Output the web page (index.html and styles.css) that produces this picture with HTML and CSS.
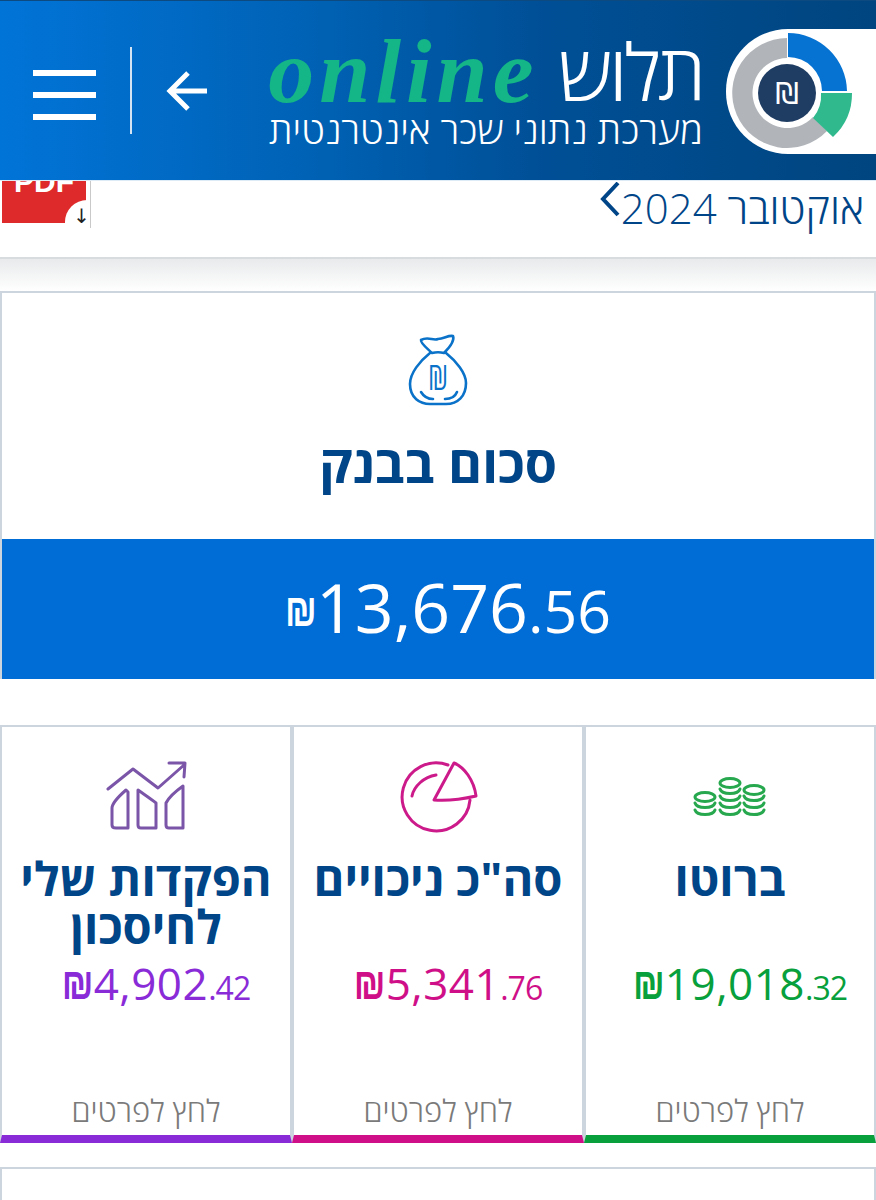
FILE: index.html
```html
<!DOCTYPE html>
<html lang="he" dir="rtl">

<head>
  <meta charset="UTF-8">
  <meta name="viewport" content="width=device-width, initial-scale=1.0">
  <title>תלוש online</title>
  <link rel="stylesheet" href="styles.css">
</head>

<body>
  <header class="top-bar">
    <div class="logo-box">
      <svg class="logo-chart" viewBox="726 28 150 125">
        <path d="M787 37A55 55 0 1 0 827 130L813 116A35 35 0 1 1 787 57Z" fill="#b1b5ba" />
        <path d="M788 32A59 59 0 0 1 847 90H822A34 34 0 0 0 788 56Z" fill="#0673d3" />
        <path d="M821 92H852A59 59 0 0 1 833 136L813 117A35 35 0 0 0 821 92Z" fill="#2fb98d" />
        <circle cx="787" cy="92" r="29" fill="#1f3d63" />
        <text class="logo-shekel" x="787" y="103" text-anchor="middle">₪</text>
      </svg>
    </div>
    <div class="brand">
      <div class="brand-main">
        <span class="brand-name">תלוש</span>
        <span class="brand-online" dir="ltr">online</span>
      </div>
      <div class="brand-sub">מערכת נתוני שכר אינטרנטית</div>
    </div>
    <svg class="back-arrow" viewBox="0 0 44 44">
      <path d="M42 22H5M23 4L5 22L23 40" />
    </svg>
    <div class="divider"></div>
    <div class="menu-btn">
      <span></span>
      <span></span>
      <span></span>
    </div>
  </header>

  <section class="month-bar">
    <div class="month">
      <span>אוקטובר 2024</span>
      <svg class="chevron" viewBox="0 0 22 40">
        <path d="M20 1L5 17L20 33" />
      </svg>
    </div>
    <div class="pdf-icon">
      <div class="pdf-page">PDF</div>
      <div class="pdf-corner">↓</div>
    </div>
  </section>
  <div class="bar-shadow"></div>

  <section class="bank-card">
    <div class="bank-head">
      <svg class="bag-icon" viewBox="405 330 66 78">
        <path d="M430 352C420 360 410 372 410 383C410 397 420 403 430 403H446C458 403 466 395 466 382C466 372 456 360 446 352" />
        <path d="M432 352C428 348 420 342 421 339C428 335 433 340 438 338C444 338 448 334 453 335C455 340 449 347 444 352C440 351 436 351 432 352Z" />
        <path d="M421 391C424 396 428 398 433 398M445 398C451 398 455 396 457 391" />
        <text class="bag-shekel" transform="translate(438 389) scale(.85 1.15)" text-anchor="middle">₪</text>
      </svg>
      <h2 class="bank-title">סכום בבנק</h2>
    </div>
    <div class="bank-amount" dir="ltr">
      <span class="shekel">₪</span><span class="whole">13,676</span><span class="cents">.56</span>
    </div>
  </section>

  <section class="summary">
    <div class="sum-card green">
      <svg class="sum-icon" viewBox="690 775 80 45">
        <ellipse cx="705" cy="796" rx="10" ry="4.5" />
        <path d="M695 802C697 808 713 808 715 802M695 809C697 815 713 815 715 809" />
        <ellipse cx="730" cy="782" rx="10" ry="4.5" />
        <path d="M720 788C722 794 738 794 740 788M720 795C722 801 738 801 740 795M720 802C722 808 738 808 740 802M720 809C722 815 738 815 740 809" />
        <ellipse cx="754" cy="789" rx="10" ry="4.5" />
        <path d="M744 795C746 801 762 801 764 795M744 802C746 808 762 808 764 802M744 809C746 815 762 815 764 809" />
      </svg>
      <h3 class="sum-title">ברוטו</h3>
      <div class="sum-amount" dir="ltr"><b>₪</b>19,018<small>.32</small></div>
      <div class="sum-link">לחץ לפרטים</div>
    </div>

    <div class="sum-card pink">
      <svg class="sum-icon" viewBox="395 755 85 80">
        <path d="M447 765A34 34 0 1 0 469 800" />
        <path d="M433 800L453 763C463 767 473 780 475 796C462 799 447 801 433 800Z" />
        <path d="M411 796C413 786 423 777 435 775" />
      </svg>
      <h3 class="sum-title">סה"כ ניכויים</h3>
      <div class="sum-amount" dir="ltr"><b>₪</b>5,341<small>.76</small></div>
      <div class="sum-link">לחץ לפרטים</div>
    </div>

    <div class="sum-card purple">
      <svg class="sum-icon" viewBox="103 755 85 80">
        <path d="M107 789L132 769L157 788L183 765M168 763H184L183 777" />
        <path d="M125 790C117 797 111 803 111 808V825C111 827 113 828 115 828H127V792Z" />
        <path d="M137 790C144 795 150 799 155 803V828H140C138 828 137 827 137 825Z" />
        <path d="M182 786C175 791 168 797 165 803V825C165 827 166 828 168 828H182Z" />
      </svg>
      <h3 class="sum-title">הפקדות שלי לחיסכון</h3>
      <div class="sum-amount" dir="ltr"><b>₪</b>4,902<small>.42</small></div>
      <div class="sum-link">לחץ לפרטים</div>
    </div>
  </section>

  <section class="next-card"></section>
</body>

</html>
```

FILE: styles.css
```css
html,
body {
  margin: 0;
  padding: 0;
}

body {
  height: 1200px;
  overflow: hidden;
  background-color: #ffffff;
  font-family: 'Open Sans', 'Liberation Sans', sans-serif;
  color: #004587;
}

/* Top bar */
.top-bar {
  height: 181px;
  box-sizing: border-box;
  border-top: 1px solid #0d4a80;
  border-bottom: 1px solid #dcebf5;
  background: linear-gradient(90deg, #0174d8 0%, #0062b5 35%, #004f96 62%, #00457f 100%);
  display: flex;
  align-items: center;
}

.logo-box {
  width: 150px;
  height: 125px;
  flex: none;
  background-color: #ffffff;
  border-radius: 62px 0 0 62px;
  margin-left: 23px;
  margin-top: 1px;
}

.logo-chart {
  display: block;
  width: 150px;
  height: 125px;
}

.logo-shekel {
  font-family: 'DejaVu Sans', sans-serif;
  font-size: 30px;
  fill: #ffffff;
}

.brand {
  width: 434px;
  flex: none;
  color: #ffffff;
}

.brand-main {
  display: flex;
  align-items: center;
  gap: 20px;
  height: 76px;
}

.brand-name {
  font-size: 78px;
  font-weight: 300;
  line-height: 76px;
  letter-spacing: -3px;
}

.brand-online {
  font-family: 'Liberation Serif', serif;
  font-style: italic;
  font-weight: 700;
  font-size: 92px;
  line-height: 76px;
  color: #14b586;
  letter-spacing: 5px;
}

.brand-sub {
  font-size: 38.2px;
  font-weight: 300;
  line-height: 40px;
  white-space: nowrap;
}

.back-arrow {
  width: 44px;
  height: 44px;
  margin-right: 60px;
  flex: none;
}

.back-arrow path {
  fill: none;
  stroke: #ffffff;
  stroke-width: 5;
}

.divider {
  width: 2px;
  height: 87px;
  background-color: #d5e4f2;
  margin-right: 33px;
  flex: none;
}

.menu-btn {
  width: 63px;
  margin-right: 34px;
  margin-top: 8px;
  display: flex;
  flex-direction: column;
  gap: 16px;
  flex: none;
}

.menu-btn span {
  display: block;
  height: 6px;
  background-color: #ffffff;
}

/* Month row */
.month-bar {
  height: 76px;
  border-bottom: 2px solid #d8dcdf;
  display: flex;
  justify-content: space-between;
  overflow: hidden;
}

.month {
  display: flex;
  align-items: flex-start;
  gap: 1px;
  margin-right: 12px;
  font-size: 42px;
  font-weight: 300;
  line-height: 54px;
}

.chevron {
  width: 22px;
  height: 40px;
  margin-top: 1px;
}

.chevron path {
  fill: none;
  stroke: #004587;
  stroke-width: 4;
}

.pdf-icon {
  position: relative;
  width: 90px;
  height: 55px;
  margin-top: -8px;
  border-right: 1px solid #c9c9c9;
  display: flex;
  justify-content: flex-end;
  flex: none;
  overflow: hidden;
}

.pdf-page {
  width: 84px;
  height: 50px;
  margin-left: 2px;
  background-color: #de2a2a;
  color: #ffffff;
  font-family: 'Liberation Sans', sans-serif;
  font-size: 30px;
  font-weight: 700;
  line-height: 18px;
  text-align: center;
}

/* white notch in the page corner */
.pdf-corner {
  position: absolute;
  left: 65px;
  bottom: 0;
  width: 25px;
  height: 28px;
  box-sizing: border-box;
  padding-left: 11px;
  border-radius: 22px 0 0 0;
  background-color: #ffffff;
  color: #222222;
  font-family: 'DejaVu Sans', sans-serif;
  font-size: 20px;
  line-height: 32px;
  text-align: center;
  white-space: nowrap;
}

.bar-shadow {
  height: 32px;
  background: linear-gradient(180deg, #e8eaeb 0%, #ffffff 100%);
}

/* Bank card */
.bank-card {
  border: 2px solid #ccd5de;
  border-bottom: 0;
}

.bank-head {
  height: 246px;
  display: flex;
  flex-direction: column;
  align-items: center;
}

.bag-icon {
  width: 66px;
  height: 78px;
  margin-top: 38px;
}

.bag-icon path {
  fill: none;
  stroke: #0a72c8;
  stroke-width: 2.6;
  stroke-linecap: round;
  stroke-linejoin: round;
}

.bag-shekel {
  font-family: 'Open Sans', sans-serif;
  font-size: 30px;
  fill: #0a72c8;
}

.bank-title {
  margin: 20px 0 0;
  font-size: 52px;
  font-weight: 700;
  line-height: 68px;
}

.bank-amount {
  height: 140px;
  box-sizing: border-box;
  padding-left: 20px;
  background-color: #006cd6;
  color: #ffffff;
  display: flex;
  justify-content: center;
  align-items: baseline;
  line-height: 136px;
  font-size: 68px;
}

.bank-amount .shekel {
  display: inline-block;
  font-family: 'Liberation Sans', sans-serif;
  font-size: 36px;
  font-weight: 700;
  margin-right: -1px;
  transform: scaleY(1.3);
  transform-origin: 50% 75%;
}

.bank-amount .cents {
  font-size: 59px;
}

/* Three summary cards */
.summary {
  margin-top: 46px;
  display: grid;
  grid-template-columns: repeat(3, 1fr);
}

.sum-card {
  height: 418px;
  box-sizing: border-box;
  border: 2px solid #ccd5de;
  border-bottom-width: 8px;
  border-bottom-style: solid;
  display: flex;
  flex-direction: column;
  align-items: center;
  position: relative;
  text-align: center;
}

.sum-card.green {
  border-bottom-color: #07a03c;
  color: #07a03c;
}

.sum-card.pink {
  border-bottom-color: #cf0f88;
  color: #cf0f88;
}

.sum-card.purple {
  border-bottom-color: #8a2bd8;
  color: #8a2bd8;
}

.sum-icon {
  height: 80px;
  margin-top: 28px;
  flex: none;
}

.sum-icon path,
.sum-icon ellipse {
  fill: none;
  stroke-width: 3;
  stroke-linecap: round;
  stroke-linejoin: round;
}

.green .sum-icon {
  stroke: #27a84e;
  width: 80px;
  height: 45px;
  margin-top: 49px;
  margin-bottom: 14px;
}

.pink .sum-icon {
  stroke: #cc1a8a;
  width: 85px;
}

.purple .sum-icon {
  stroke: #7b55a8;
  width: 85px;
}

.sum-title {
  margin: 19px 0 0;
  height: 96px;
  padding: 0 12px;
  color: #004587;
  font-size: 47px;
  font-weight: 700;
  line-height: 48px;
}

.sum-amount {
  margin-top: 8px;
  padding-left: 20px;
  font-size: 44px;
  letter-spacing: 0.5px;
  line-height: 50px;
  white-space: nowrap;
}

.sum-amount b {
  display: inline-block;
  font-family: 'Liberation Sans', sans-serif;
  font-size: 36px;
  letter-spacing: 0;
  transform: scaleY(1.25);
  transform-origin: 50% 80%;
}

.sum-amount small {
  font-size: 32px;
  letter-spacing: -1px;
}

.sum-link {
  margin-top: auto;
  margin-bottom: 6px;
  color: #7a7a7a;
  font-size: 31px;
  font-weight: 300;
  line-height: 38px;
}

.next-card {
  margin-top: 24px;
  height: 33px;
  box-sizing: border-box;
  border: 2px solid #ccd5de;
  border-bottom: 0;
}
```
